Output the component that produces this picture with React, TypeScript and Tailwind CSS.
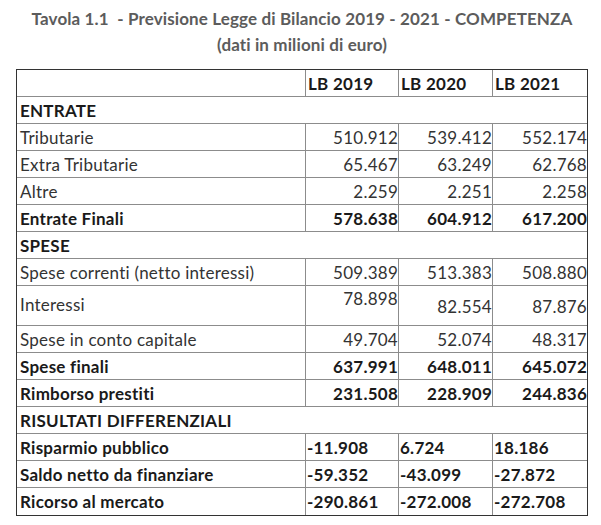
type Row =
    | { kind: 'section'; label: string }
    | { kind: 'data'; label: string; values: string[]; bold?: boolean; left?: boolean };

const rows: Row[] = [
    { kind: 'section', label: 'ENTRATE' },
    { kind: 'data', label: 'Tributarie', values: ['510.912', '539.412', '552.174'] },
    { kind: 'data', label: 'Extra Tributarie', values: ['65.467', '63.249', '62.768'] },
    { kind: 'data', label: 'Altre', values: ['2.259', '2.251', '2.258'] },
    { kind: 'data', label: 'Entrate Finali', values: ['578.638', '604.912', '617.200'], bold: true },
    { kind: 'section', label: 'SPESE' },
    { kind: 'data', label: 'Spese correnti (netto interessi)', values: ['509.389', '513.383', '508.880'] },
    { kind: 'data', label: 'Interessi', values: ['78.898', '82.554', '87.876'] },
    { kind: 'data', label: 'Spese in conto capitale', values: ['49.704', '52.074', '48.317'] },
    { kind: 'data', label: 'Spese finali', values: ['637.991', '648.011', '645.072'], bold: true },
    { kind: 'data', label: 'Rimborso prestiti', values: ['231.508', '228.909', '244.836'], bold: true },
    { kind: 'section', label: 'RISULTATI DIFFERENZIALI' },
    { kind: 'data', label: 'Risparmio pubblico', values: ['-11.908', '6.724', '18.186'], bold: true, left: true },
    { kind: 'data', label: 'Saldo netto da finanziare', values: ['-59.352', '-43.099', '-27.872'], bold: true, left: true },
    { kind: 'data', label: 'Ricorso al mercato', values: ['-290.861', '-272.008', '-272.708'], bold: true, left: true },
];

const widths = ['w-[93px] border-r', 'w-[94px] border-r', 'flex-1'];

export default function App() {
    return (
        <div className="min-h-screen bg-white font-['Lato',sans-serif] text-[17px] tracking-[0.25px] text-[#333]">
            <div className="ml-[16px] w-[572px] pt-[6px]">
                <div className="text-center text-[17px] font-bold leading-[26px] tracking-[0.12px] text-[#5c5c5c]">
                    <p>Tavola 1.1&nbsp; - Previsione Legge di Bilancio 2019 - 2021 - COMPETENZA</p>
                    <p>(dati in milioni di euro)</p>
                </div>

                <div className="mt-[11px] border border-[#333]">
                    {/* header */}
                    <div className="flex h-[27px] border-b border-[#8c8c8c] font-bold text-[#1a1a1a]">
                        <div className="w-[289px] border-r border-[#8c8c8c]" />
                        {['LB 2019', 'LB 2020', 'LB 2021'].map((h, i) => (
                            <div key={h} className={`${widths[i]} border-[#8c8c8c] pl-[2px] pt-[2px] leading-[24px]`}>
                                {h}
                            </div>
                        ))}
                    </div>

                    {rows.map((row, idx) => {
                        const last = idx === rows.length - 1;
                        const border = last ? '' : 'border-b border-[#8c8c8c]';
                        if (row.kind === 'section') {
                            return (
                                <div
                                    key={row.label}
                                    className={`h-[27px] ${border} pl-[3px] pt-[2px] font-bold leading-[24px] text-[#1a1a1a]`}
                                >
                                    {row.label}
                                </div>
                            );
                        }
                        const tall = row.label === 'Interessi';
                        return (
                            <div
                                key={row.label}
                                className={`flex ${tall ? 'h-[40px]' : 'h-[27px]'} ${border} ${row.bold ? 'font-bold text-[#1a1a1a]' : ''}`}
                            >
                                <div className={`w-[289px] border-r border-[#8c8c8c] pl-[3px] leading-[24px] ${tall ? 'pt-[7px]' : 'pt-[2px]'}`}>
                                    {row.label}
                                </div>
                                {row.values.map((v, i) => (
                                    <div
                                        key={i}
                                        className={`${widths[i]} border-[#8c8c8c] leading-[24px] ${row.left ? 'pl-[1px] text-left' : 'text-right'} ${
                                            tall ? (i === 0 ? 'pt-[1px]' : 'pt-[9px]') : 'pt-[2px]'
                                        }`}
                                    >
                                        {v}
                                    </div>
                                ))}
                            </div>
                        );
                    })}
                </div>
            </div>
        </div>
    );
}
